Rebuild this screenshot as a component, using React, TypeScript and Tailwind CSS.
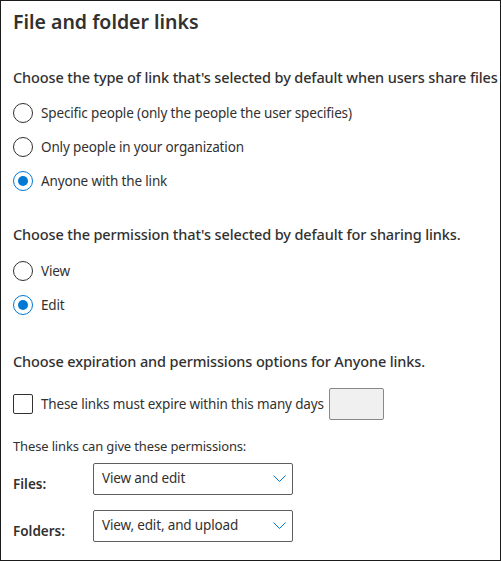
import React from 'react';

const Radio = ({ checked, label }: { checked?: boolean; label: string }) => (
  <div className="flex items-center h-[34px]">
    <div
      className={`w-5 h-5 rounded-full border flex items-center justify-center ${checked ? 'border-[#0078d4]' : 'border-[#323130]'}`}
    >
      {checked && <div className="w-[10px] h-[10px] rounded-full bg-[#0078d4]" />}
    </div>
    <span className="ml-2 text-[13.5px] tracking-[-0.15px] text-[#323130]">{label}</span>
  </div>
);

const Chevron = () => (
  <svg width="13" height="7" viewBox="0 0 13 7" fill="none">
    <path d="M0.5 0.5l6 6 6-6" stroke="#0078d4" strokeWidth="1" />
  </svg>
);

const Dropdown = ({ value }: { value: string }) => (
  <div className="w-[200px] h-[32px] border border-[#605e5c] rounded-[2px] flex items-center justify-between pl-[8px] pr-[6px]">
    <span className="text-[13.5px] tracking-[-0.15px] text-[#323130]">{value}</span>
    <Chevron />
  </div>
);

export default function App() {
  return (
    <div
      className="w-[501px] h-[561px] border border-[#1b1b1b] bg-white pl-[12px] pr-1 text-[#323130] overflow-hidden"
      style={{ fontFamily: '"Noto Sans", "Open Sans", sans-serif' }}
    >
      <h1 className="text-[19.5px] font-semibold mt-[7px] leading-[28px]">File and folder links</h1>

      <h2 className="text-[14.5px] font-medium tracking-[-0.13px] mt-[30px] leading-[22px] whitespace-nowrap">
        Choose the type of link that's selected by default when users share files
      </h2>
      <div className="mt-[8px]">
        <Radio label="Specific people (only the people the user specifies)" />
        <Radio label="Only people in your organization" />
        <Radio checked label="Anyone with the link" />
      </div>

      <h2 className="text-[14.5px] font-medium tracking-[-0.13px] mt-[25px] leading-[22px] whitespace-nowrap">
        Choose the permission that's selected by default for sharing links.
      </h2>
      <div className="mt-[9px]">
        <Radio label="View" />
        <Radio checked label="Edit" />
      </div>

      <h2 className="text-[14.5px] font-medium tracking-[-0.13px] mt-[28px] leading-[22px] whitespace-nowrap">
        Choose expiration and permissions options for Anyone links.
      </h2>
      <div className="flex items-center mt-[16px]">
        <div className="w-5 h-5 border border-[#323130] rounded-[2px]" />
        <span className="ml-[8px] text-[13.5px] tracking-[-0.15px]">These links must expire within this many days</span>
        <div className="ml-[5px] w-[55px] h-[32px] bg-[#f0f0f0] border border-[#8a8886] rounded-[2px]" />
      </div>

      <p className="text-[13px] tracking-[-0.15px] mt-[17px]">These links can give these permissions:</p>
      <div className="flex items-center mt-[6px]">
        <span className="w-[80px] text-[13.5px] font-semibold pt-[11px]">Files:</span>
        <Dropdown value="View and edit" />
      </div>
      <div className="flex items-center mt-[15px]">
        <span className="w-[80px] text-[13.5px] font-semibold pt-[11px]">Folders:</span>
        <Dropdown value="View, edit, and upload" />
      </div>
    </div>
  );
}
